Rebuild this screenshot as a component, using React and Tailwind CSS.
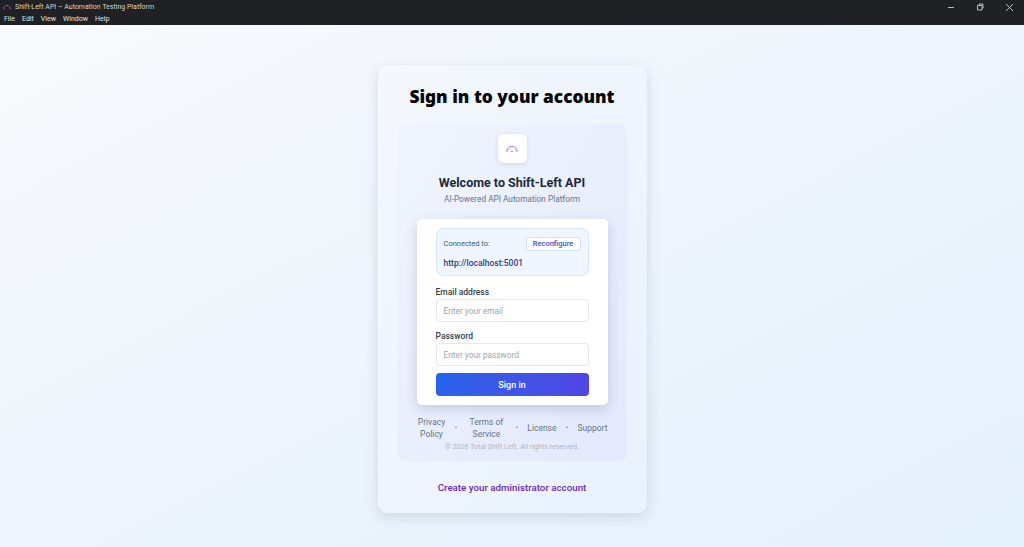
export default function App() {
  const font = "font-['Roboto','Noto_Sans',sans-serif]";
  return (
    <div className={`w-[1024px] h-[547px] flex flex-col overflow-hidden ${font}`}>
      <div className="h-[25px] bg-[#202124] text-[#d4d4d4] shrink-0 flex justify-between">
        <div className="flex flex-col">
          <div className="h-[14px] flex items-center gap-[4px] pl-[3px] text-[7px] leading-none">
            <svg width="8" height="6" viewBox="0 0 16 12" fill="none" strokeWidth="2">
              <path d="M2 11A6 6 0 0 1 8 3" stroke="#c2417c" />
              <path d="M8 3a6 6 0 0 1 6 8" stroke="#7c5bd6" />
            </svg>
            <span>Shift-Left API – Automation Testing Platform</span>
          </div>
          <div className="h-[11px] flex items-center gap-[7px] pl-[4px] text-[7px] leading-none text-[#e2e2e2]">
            <span>File</span><span>Edit</span><span>View</span><span>Window</span><span>Help</span>
          </div>
        </div>
        <div className="flex items-start gap-[21px] pr-[10px] pt-[3px] text-[#b8b8b8]">
          <svg width="8" height="8" viewBox="0 0 8 8" stroke="currentColor" fill="none"><path d="M1 4.5h6" /></svg>
          <svg width="8" height="8" viewBox="0 0 8 8" stroke="currentColor" fill="none"><path d="M1.5 2.5h4.5v4.5h-4.5zM3 2.5v-1.500h4v4h-1" /></svg>
          <svg width="9" height="9" viewBox="0 0 9 9" stroke="currentColor" fill="none"><path d="M1 1l7 7M8 1l-7 7" /></svg>
        </div>
      </div>

      <div className="flex-1 flex justify-center pt-[40px] bg-gradient-to-br from-[#f8fafc] to-[#e4f0fc]">
        <div className="w-[269px] h-[448px] rounded-[10px] bg-gradient-to-br from-[#f5f8fd] to-[#e8f2fd] shadow-[0_4px_14px_rgba(100,116,139,0.22)] px-[19px] pt-[21px] flex flex-col items-center">
          <h1 className="font-['Noto_Sans',sans-serif] text-[17.300px] leading-[22px] font-black text-black whitespace-nowrap">Sign in to your account</h1>
          <div className="mt-[16px] w-[230px] h-[337px] rounded-[8px] bg-gradient-to-br from-[#f0f5fe] to-[#e3e8fc] flex flex-col items-center pt-[10px]">
            <div className="w-[29px] h-[29px] rounded-[5px] bg-white shadow-[0_1px_4px_rgba(100,116,139,0.2)] flex items-center justify-center">
              <svg width="12" height="8" viewBox="0 0 24 16" fill="none" strokeWidth="1.600">
                <path d="M2 14A10 10 0 0 1 12 3" stroke="#c2417c" />
                <path d="M12 3a10 10 0 0 1 10 11" stroke="#7c5bd6" />
                <circle cx="12" cy="13" r="1.500" fill="#b0437f" />
              </svg>
            </div>
            <h2 className="mt-[11px] text-[12.500px] leading-[17px] font-bold text-[#1e293b]">Welcome to Shift-Left API</h2>
            <p className="mt-[2px] text-[8.250px] leading-[12px] text-[#64748b]">AI-Powered API Automation Platform</p>

            <div className="mt-[14px] w-[191px] h-[186px] rounded-[5px] bg-white shadow-[0_4px_12px_rgba(100,116,139,0.28)] px-[19px] pt-[9px]">
              <div className="h-[48px] rounded-[7px] bg-[#eff6ff] border border-[#d6e6f8] px-[7px] pt-[8px]">
                <div className="flex justify-between items-center h-[14px]">
                  <span className="text-[7.500px] text-[#475569]">Connected to:</span>
                  <span className="w-[55px] h-[14px] rounded-[3px] bg-white border border-[#d5e0f5] flex items-center justify-center text-[7.500px] font-medium text-[#3f51b5]">Reconfigure</span>
                </div>
                <div className="mt-[6px] text-[8.500px] leading-[12px] font-medium text-[#2f3f80]">http://localhost:5001</div>
              </div>
              <label className="block mt-[10px] text-[8.500px] leading-[12px] font-medium text-[#374151]">Email address</label>
              <div className="mt-[1px] h-[23px] rounded-[4px] border border-[#e2e8f0] bg-white flex items-center px-[7px] pt-[2px] text-[8.300px] text-[#9ca3af]">Enter your email</div>
              <label className="block mt-[8px] text-[8.500px] leading-[12px] font-medium text-[#374151]">Password</label>
              <div className="mt-[1px] h-[23px] rounded-[4px] border border-[#e2e8f0] bg-white flex items-center px-[7px] pt-[2px] text-[8.300px] text-[#9ca3af]">Enter your password</div>
              <div className="mt-[7px] h-[23px] rounded-[4px] bg-gradient-to-r from-[#2563eb] to-[#4f46e5] flex items-center justify-center pt-[2px] text-[9px] font-medium text-white">Sign in</div>
            </div>

            <div className="mt-[11px] ml-[1px] w-[190px] flex items-center justify-between text-[8.500px] leading-[12px] text-[#64748b] text-center">
              <span className="w-[28px]">Privacy Policy</span>
              <span className="text-[7px]">•</span>
              <span className="w-[40px]">Terms of Service</span>
              <span className="text-[7px]">•</span>
              <span>License</span>
              <span className="text-[7px]">•</span>
              <span>Support</span>
            </div>
            <p className="mt-[2px] text-[7.100px] leading-[10px] text-[#aeb6c6]">© 2026 Total Shift Left. All rights reserved.</p>
          </div>
          <a className="mt-[20px] text-[9.750px] leading-[14px] font-medium text-[#6d28b9]">Create your administrator account</a>
        </div>
      </div>
    </div>
  );
}
